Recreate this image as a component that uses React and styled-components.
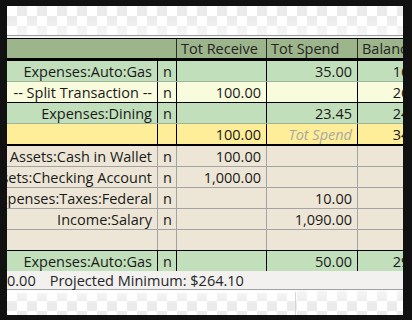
import React from "react";
import styled, { createGlobalStyle } from "styled-components";

const Global = createGlobalStyle`
  html, body {
    margin: 0;
    padding: 0;
    background: #111111;
  }
  body {
    font-family: "Open Sans", "DejaVu Sans", sans-serif;
  }
`;

const Frame = styled.div`
  width: 412px;
  height: 320px;
  box-sizing: border-box;
  padding: 6px 9px 5px 7px;
  background: #111111;
  overflow: hidden;
`;

const Window = styled.div`
  width: 396px;
  height: 309px;
  display: flex;
  flex-direction: column;
  overflow: hidden;
  background: #f2f1f0;
`;

const Checker = styled.div`
  position: relative;
  height: ${(p) => p.$h}px;
  flex-shrink: 0;
  background-color: #ffffff;
  background-image: conic-gradient(
    #ebebeb 0 25%,
    #ffffff 0 50%,
    #ebebeb 0 75%,
    #ffffff 0
  );
  background-size: 20px 20px;
  &::after {
    content: "";
    position: absolute;
    inset: 0;
    background: linear-gradient(
      ${(p) => (p.$top ? "to bottom" : "to top")},
      rgba(255, 255, 255, 0) 40%,
      rgba(255, 255, 255, 0.55) 100%
    );
  }
`;

const Separator = styled.div`
  height: 3px;
  flex-shrink: 0;
  box-sizing: border-box;
  border-top: 1px solid #9d9d9d;
  background: #f4f4f4;
`;

const Table = styled.div`
  display: flex;
  flex-direction: column;
  flex-shrink: 0;
  width: 436px;
  font-size: 14.5px;
  color: #1a1a1a;
`;

const HeaderRow = styled.div`
  display: flex;
  height: 19px;
  border-top: 1px solid #000;
  border-bottom: 3px solid #000;
  background: #9cb58a;
`;

const HeadCell = styled.div`
  width: ${(p) => p.$w}px;
  flex-shrink: 0;
  box-sizing: border-box;
  border-right: 1px solid #2b2b2b;
  padding-left: 4px;
  display: flex;
  align-items: center;
  white-space: nowrap;
  overflow: hidden;
  color: #242424;
  &:last-child {
    border-right: none;
  }
`;

const rowColors = {
  green: { bg: "#c2dfbc", line: "#000000", bottom: "1px solid #9fb59a" },
  split: { bg: "#f8fbdc", line: "#000000", bottom: "1px solid #000000" },
  edit: { bg: "#ffee99", line: "#000000", bottom: "2px solid #000000" },
  beige: { bg: "#ede6d6", line: "#a3a3a3", bottom: "1px solid #a3a3a3" },
  beigeEnd: { bg: "#ede6d6", line: "#a3a3a3", bottom: "1px solid #000000" },
  bottom: { bg: "#c2dfbc", line: "#000000", bottom: "none" },
};

const Row = styled.div`
  display: flex;
  height: 20px;
  flex-shrink: 0;
  background: ${(p) => rowColors[p.$kind].bg};
  border-bottom: ${(p) => rowColors[p.$kind].bottom};
`;

const Cell = styled.div`
  width: ${(p) => p.$w}px;
  flex-shrink: 0;
  box-sizing: border-box;
  border-right: 1px solid ${(p) => rowColors[p.$kind].line};
  padding: 0 ${(p) => (p.$center ? 0 : 5)}px 0 ${(p) => (p.$center ? 5 : 0)}px;
  display: flex;
  align-items: center;
  justify-content: ${(p) => (p.$center ? "flex-start" : "flex-end")};
  white-space: nowrap;
  overflow: hidden;
  &:last-child {
    border-right: none;
  }
`;

const Hint = styled.span`
  font-style: italic;
  color: #a9a9a0;
`;

const StatusBar = styled.div`
  height: 18px;
  flex-shrink: 0;
  display: flex;
  align-items: center;
  gap: 14px;
  font-size: 14.5px;
  color: #262626;
  background: #f2f1f0;
  border-bottom: 1px solid #a3a3a3;
  white-space: nowrap;
`;

const Highlight = styled.div`
  height: 1px;
  flex-shrink: 0;
  background: #fafafa;
`;

const ScrollThumb = styled.div`
  position: absolute;
  left: 0;
  top: 0;
  width: 289px;
  height: 100%;
  box-sizing: border-box;
  border-top: 2px solid #ffffff;
  border-right: 1px solid #d6d6d6;
  z-index: 1;
`;

const widths = [151, 19, 90, 91, 85];

const rows = [
  { kind: "green", cells: ["Expenses:Auto:Gas", "n", "", "35.00", "165.00"] },
  { kind: "split", cells: ["-- Split Transaction --", "n", "100.00", "", "265.00"] },
  { kind: "green", cells: ["Expenses:Dining", "n", "", "23.45", "241.55"] },
  { kind: "edit", cells: ["", "", "100.00", "hint", "341.55"] },
  { kind: "beige", cells: ["Assets:Cash in Wallet", "n", "100.00", "", ""] },
  { kind: "beige", cells: ["Assets:Checking Account", "n", "1,000.00", "", ""] },
  { kind: "beige", cells: ["Expenses:Taxes:Federal", "n", "", "10.00", ""] },
  { kind: "beige", cells: ["Income:Salary", "n", "", "1,090.00", ""] },
  { kind: "beigeEnd", cells: ["", "", "", "", ""] },
  { kind: "bottom", cells: ["Expenses:Auto:Gas", "n", "", "50.00", "291.55"] },
];

export default function App() {
  return (
    <>
      <Global />
      <Frame>
        <Window>
          <Checker $h={29} $top />
          <Separator />
          <Table>
            <HeaderRow>
              <HeadCell $w={170} />
              <HeadCell $w={90}>Tot Receive</HeadCell>
              <HeadCell $w={91}>Tot Spend</HeadCell>
              <HeadCell $w={85}>Balance</HeadCell>
            </HeaderRow>
            {rows.map((r, i) => (
              <Row key={i} $kind={r.kind}>
                {r.cells.map((c, j) => (
                  <Cell key={j} $w={widths[j]} $kind={r.kind} $center={j === 1}>
                    {c === "hint" ? <Hint>Tot Spend</Hint> : c}
                  </Cell>
                ))}
              </Row>
            ))}
          </Table>
          <StatusBar>
            <span>0.00</span>
            <span>Projected Minimum: $264.10</span>
          </StatusBar>
          <Highlight />
          <Checker $h={24}>
            <ScrollThumb />
          </Checker>
        </Window>
      </Frame>
    </>
  );
}
